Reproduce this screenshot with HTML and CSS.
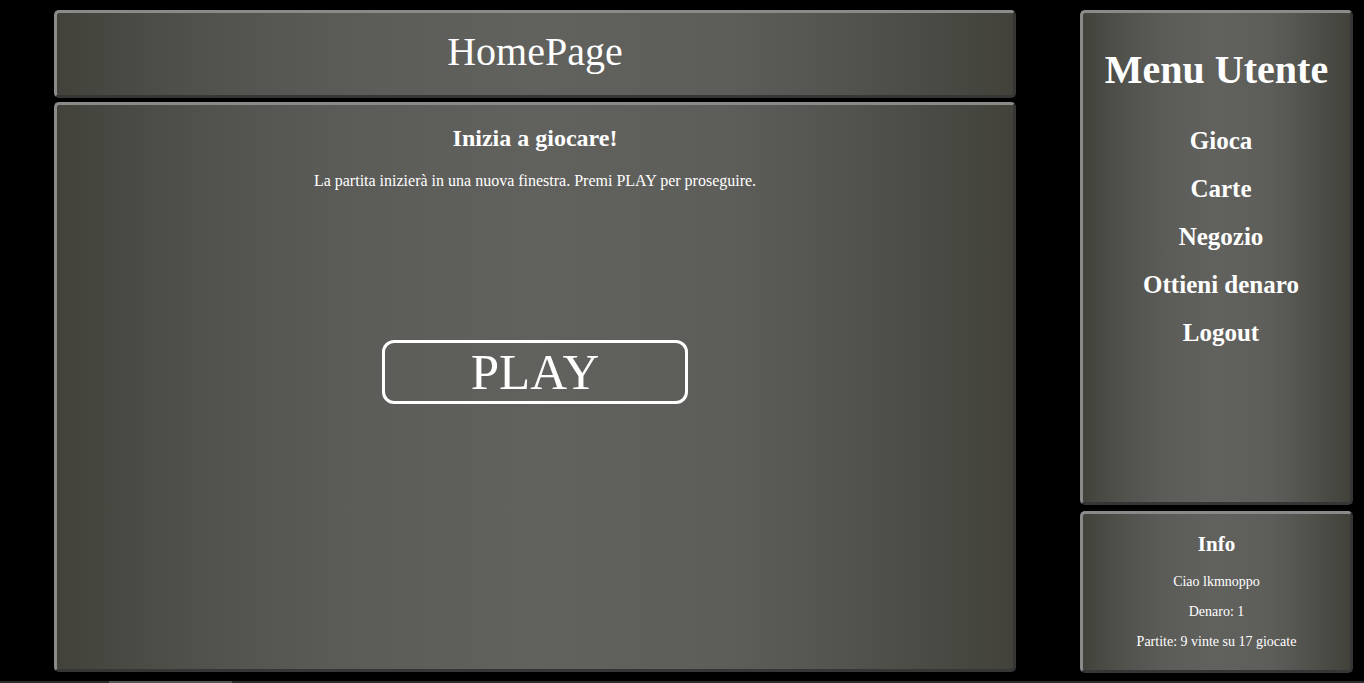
FILE: index.html
```html
<!DOCTYPE html>
<html lang="it">
<head>
<meta charset="utf-8">
<title>HomePage</title>
<link rel="stylesheet" href="styles.css">
</head>
<body>
<div class="page">
  <div class="left-col">
    <header class="panel header">
      <h1 class="title">HomePage</h1>
    </header>
    <main class="panel main">
      <h2 class="main-heading">Inizia a giocare!</h2>
      <p class="main-text">La partita inizierà in una nuova finestra. Premi PLAY per proseguire.</p>
      <button class="play">PLAY</button>
    </main>
  </div>
  <div class="right-col">
    <nav class="panel menu">
      <h2 class="menu-title">Menu Utente</h2>
      <ul class="menu-list">
        <li class="menu-item">Gioca</li>
        <li class="menu-item">Carte</li>
        <li class="menu-item">Negozio</li>
        <li class="menu-item">Ottieni denaro</li>
        <li class="menu-item">Logout</li>
      </ul>
    </nav>
    <aside class="panel info">
      <h3 class="info-title">Info</h3>
      <p class="info-line">Ciao lkmnoppo</p>
      <p class="info-line">Denaro: 1</p>
      <p class="info-line">Partite: 9 vinte su 17 giocate</p>
    </aside>
  </div>
</div>
<div class="hscroll"><div class="hscroll-thumb"></div></div>
</body>
</html>
```

FILE: styles.css
```css
html, body {
  margin: 0;
  padding: 0;
  background: #000;
  height: 683px;
  overflow: hidden;
}

body {
  font-family: "Liberation Serif", "Times New Roman", serif;
  color: #fff;
}

.page {
  display: flex;
  gap: 64px;
  padding: 10px 0 0 54px;
  height: 663px;
}

.left-col {
  width: 962px;
  display: flex;
  flex-direction: column;
  gap: 4px;
}

.right-col {
  width: 273px;
  display: flex;
  flex-direction: column;
  gap: 6px;
}

.panel {
  box-sizing: border-box;
  border-style: solid;
  border-width: 3px 3px 3px 3px;
  border-color: #8a8a8a #363636 #363636 #8a8a8a;
  border-radius: 5px;
  background: linear-gradient(to right, #42423b 0%, #4f4f4a 12%, #5b5b58 30%, #61615e 50%, #5d5d5a 70%, #50504b 86%, #42423b 100%);
}

.header {
  height: 88px;
  display: flex;
  align-items: center;
  justify-content: center;
}

.title {
  margin: 0;
  font-size: 40px;
  font-weight: normal;
  line-height: 1;
  transform: translateY(-2px);
}

.main {
  height: 570px;
  display: flex;
  flex-direction: column;
  align-items: center;
}

.main-heading {
  margin: 19px 0 0;
  font-size: 24px;
  font-weight: bold;
  line-height: 28px;
}

.main-text {
  margin: 20px 0 0;
  font-size: 16px;
  line-height: 18px;
}

.play {
  margin-top: 150px;
  width: 306px;
  height: 64px;
  box-sizing: border-box;
  border: 3px solid #fff;
  border-radius: 12px;
  background: transparent;
  color: #fff;
  font-family: "Liberation Serif", "Times New Roman", serif;
  font-size: 51px;
  line-height: 1;
  padding: 0;
}

.menu {
  height: 495px;
  display: flex;
  flex-direction: column;
  align-items: center;
}

.menu-title {
  margin: 34px 0 0;
  font-size: 40px;
  font-weight: bold;
  line-height: 46px;
}

.menu-list {
  list-style: none;
  margin: 33px 0 0;
  padding: 0 0 0 9px;
  display: flex;
  flex-direction: column;
  align-items: center;
  gap: 18px;
}

.menu-item {
  font-size: 25px;
  font-weight: bold;
  line-height: 30px;
}

.info {
  height: 162px;
  display: flex;
  flex-direction: column;
  align-items: center;
}

.info-title {
  margin: 18px 0 0;
  font-size: 21px;
  font-weight: bold;
  line-height: 24px;
}

.info-line {
  margin: 0;
  font-size: 14px;
  line-height: 16px;
}

.info-title + .info-line {
  margin-top: 18px;
}

.info-line + .info-line {
  margin-top: 14px;
}

.hscroll {
  margin-top: 8px;
  height: 2px;
  background: #2c2c2c;
}

.hscroll-thumb {
  margin-left: 109px;
  width: 123px;
  height: 2px;
  background: #555;
}
```
